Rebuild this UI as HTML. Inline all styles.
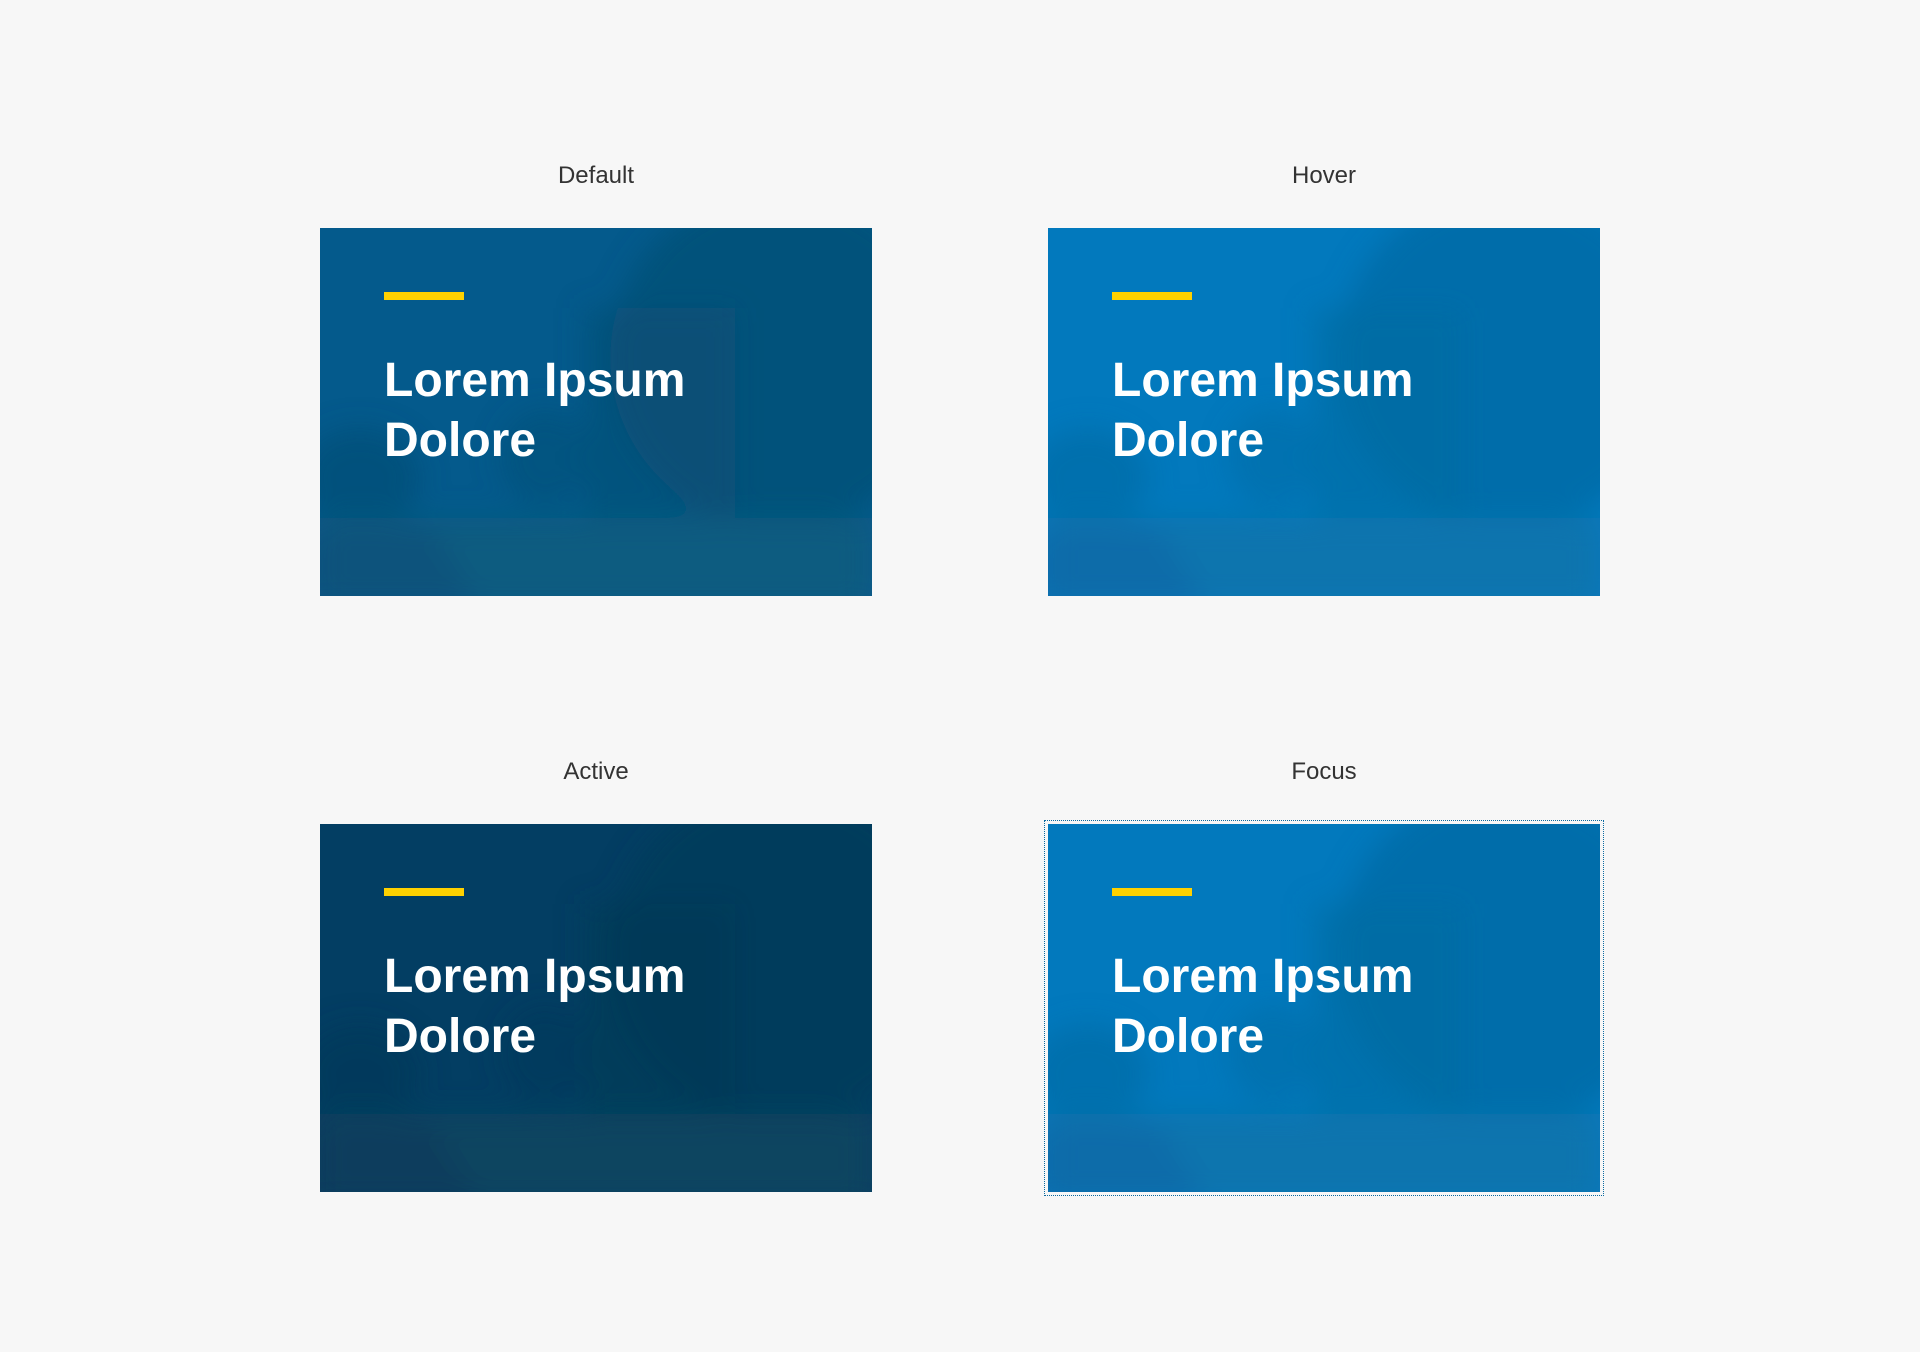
<!DOCTYPE html>
<html><head><style>
html,body{margin:0;padding:0;}
body{width:1920px;height:1352px;background:#f7f7f7;position:relative;font-family:"Liberation Sans",Arial,sans-serif;overflow:hidden;}
.lbl{position:absolute;width:552px;text-align:center;font-size:24px;color:#333;top:162px;}
.card{position:absolute;width:552px;height:368px;overflow:hidden;}
.card .bar{position:absolute;left:64px;top:64px;width:80px;height:8px;background:#ffd100;}
.card .t{position:absolute;left:64px;top:123px;color:#fff;font-weight:bold;font-size:48px;line-height:60px;}
.scene{position:absolute;inset:0;}
</style></head><body>
<svg width="0" height="0" style="position:absolute"><filter id="b" x="-20%" y="-20%" width="140%" height="140%"><feGaussianBlur stdDeviation="14"/></filter></svg>
<div class="lbl" style="left:320px">Default</div>
<div class="lbl" style="left:1048px">Hover</div>
<div class="lbl" style="left:320px;top:758px">Active</div>
<div class="lbl" style="left:1048px;top:758px">Focus</div>

<div class="card" style="left:320px;top:228px">
 <svg class="scene" width="552" height="368" viewBox="0 0 552 368">
  <rect width="552" height="368" fill="#045a8c"/>
  <g filter="url(#b)">
  <ellipse cx="460" cy="130" rx="170" ry="170" fill="#074f74" opacity=".7"/>
  <rect x="265" y="80" width="150" height="210" fill="#084f75" opacity=".6"/>
  <ellipse cx="40" cy="250" rx="60" ry="50" fill="#064d73" opacity=".6"/>
  <ellipse cx="225" cy="230" rx="45" ry="50" fill="#064f76" opacity=".5"/>
  <rect y="290" width="552" height="90" fill="#0a5b80"/>
  <polygon points="-20,300 110,300 160,380 -20,380" fill="#064f7a" opacity=".7"/>
  </g>
 </svg>
 <div class="bar"></div><div class="t">Lorem Ipsum<br>Dolore</div>
</div>

<div class="card" style="left:1048px;top:228px">
 <svg class="scene" width="552" height="368" viewBox="0 0 552 368">
  <rect width="552" height="368" fill="#0279bd"/>
  <g filter="url(#b)">
  <ellipse cx="460" cy="130" rx="170" ry="170" fill="#066aa2" opacity=".7"/>
  <rect x="265" y="80" width="150" height="210" fill="#076ca3" opacity=".6"/>
  <ellipse cx="40" cy="250" rx="60" ry="50" fill="#056aa3" opacity=".6"/>
  <ellipse cx="225" cy="230" rx="45" ry="50" fill="#066ca6" opacity=".5"/>
  <rect y="290" width="552" height="90" fill="#0a74ae"/>
  <polygon points="-20,300 110,300 160,380 -20,380" fill="#056aa6" opacity=".7"/>
  </g>
 </svg>
 <div class="bar"></div><div class="t">Lorem Ipsum<br>Dolore</div>
</div>

<div class="card" style="left:320px;top:824px">
 <svg class="scene" width="552" height="368" viewBox="0 0 552 368">
  <rect width="552" height="368" fill="#033e63"/>
  <g filter="url(#b)">
  <ellipse cx="460" cy="130" rx="170" ry="170" fill="#063a58" opacity=".7"/>
  <rect x="265" y="80" width="150" height="210" fill="#073a57" opacity=".6"/>
  <ellipse cx="40" cy="250" rx="60" ry="50" fill="#053858" opacity=".6"/>
  <ellipse cx="225" cy="230" rx="45" ry="50" fill="#053a5a" opacity=".5"/>
  <rect y="290" width="552" height="90" fill="#0a4560"/>
  <polygon points="-20,300 110,300 160,380 -20,380" fill="#053a5c" opacity=".7"/>
  </g>
 </svg>
 <div class="bar"></div><div class="t">Lorem Ipsum<br>Dolore</div>
</div>

<div style="position:absolute;left:1044px;top:820px;width:558px;height:374px;border:1px dotted #0b6aa0;"></div>
<div class="card" style="left:1048px;top:824px">
 <svg class="scene" width="552" height="368" viewBox="0 0 552 368">
  <rect width="552" height="368" fill="#0279bd"/>
  <g filter="url(#b)">
  <ellipse cx="460" cy="130" rx="170" ry="170" fill="#066aa2" opacity=".7"/>
  <rect x="265" y="80" width="150" height="210" fill="#076ca3" opacity=".6"/>
  <ellipse cx="40" cy="250" rx="60" ry="50" fill="#056aa3" opacity=".6"/>
  <ellipse cx="225" cy="230" rx="45" ry="50" fill="#066ca6" opacity=".5"/>
  <rect y="290" width="552" height="90" fill="#0a74ae"/>
  <polygon points="-20,300 110,300 160,380 -20,380" fill="#056aa6" opacity=".7"/>
  </g>
 </svg>
 <div class="bar"></div><div class="t">Lorem Ipsum<br>Dolore</div>
</div>
</body></html>
